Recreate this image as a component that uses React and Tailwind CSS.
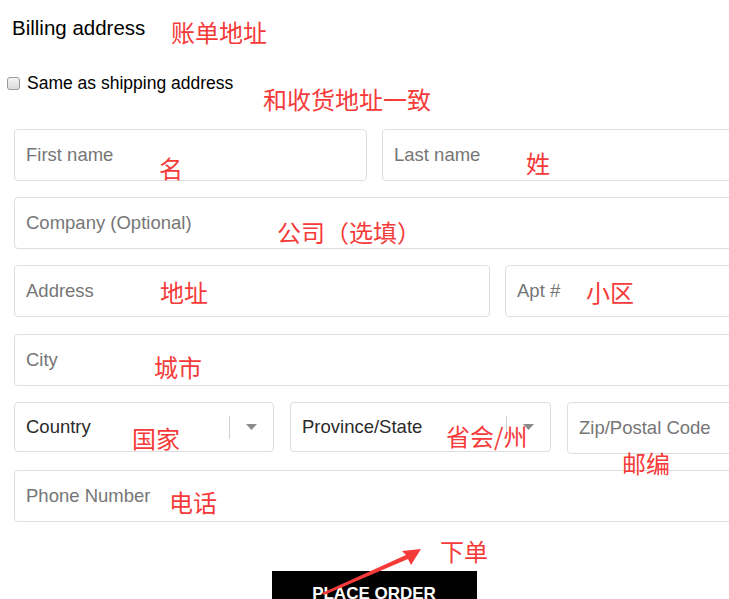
import React from 'react'

const font = { fontFamily: '"Liberation Sans", Arial, sans-serif' }

function Field({ label, className = '' }) {
  return (
    <div className={`flex h-[52px] items-center rounded-[4px] border border-[#dedede] bg-white pl-[11px] text-[18.5px] text-[#767676] ${className}`}>
      {label}
    </div>
  )
}

function SelectField({ label, className = '' }) {
  return (
    <div className={`flex h-[50px] items-center rounded-[4px] border border-[#dedede] bg-white pl-[11px] text-[18.5px] text-[#2b2b2b] ${className}`}>
      <span className="flex-1">{label}</span>
      <span className="h-[23px] w-px bg-[#d0d0d0]" />
      <span className="flex w-[43px] justify-center">
        <svg width="11" height="6" viewBox="0 0 11 6">
          <path d="M0 0 H11 L5.5 6 Z" fill="#8a8a8a" />
        </svg>
      </span>
    </div>
  )
}

function Note({ children, className }) {
  return (
    <span
      className={`absolute whitespace-nowrap text-[24px] leading-none text-[#f53a3a] ${className}`}
      style={{ fontFamily: '"Noto Sans CJK SC", "Microsoft YaHei", sans-serif' }}
    >
      {children}
    </span>
  )
}

export default function App() {
  return (
    <div className="relative h-[599px] w-[729px] overflow-hidden bg-white text-black" style={font}>
      <h2 className="ml-[12px] mt-[16px] text-[20.5px] font-normal leading-[24px]">Billing address</h2>

      <label className="mt-[33px] flex h-[20px] items-center">
        <span className="ml-[7px] h-[13px] w-[13px] rounded-[3px] border border-[#9a9a9a] bg-gradient-to-b from-[#f4f4f4] to-[#dcdcdc]" />
        <span className="ml-[7px] text-[17.5px] leading-[20px]">Same as shipping address</span>
      </label>

      <div className="ml-[14px] mt-[36px] flex w-[720px] flex-col gap-[16px]">
        <div className="grid grid-cols-[353px_1fr] gap-[15px]">
          <Field label="First name" />
          <Field label="Last name" />
        </div>
        <Field label="Company (Optional)" />
        <div className="mb-px grid grid-cols-[476px_1fr] gap-[15px]">
          <Field label="Address" />
          <Field label="Apt #" />
        </div>
        <Field label="City" />
        <div className="grid grid-cols-[260px_261px_1fr] items-start gap-[16px]">
          <SelectField label="Country" />
          <SelectField label="Province/State" />
          <Field label="Zip/Postal Code" className="h-[52px]" />
        </div>
        <Field label="Phone Number" />
        <div className="mt-[33px] flex justify-center">
          <button className="w-[205px] self-start bg-black pb-[15px] pt-[13px] text-[17px] font-bold leading-[20px] text-white">
            PLACE ORDER
          </button>
        </div>
      </div>

      <Note className="left-[171px] top-[20px]">账单地址</Note>
      <Note className="left-[263px] top-[87px]">和收货地址一致</Note>
      <Note className="left-[159px] top-[156px]">名</Note>
      <Note className="left-[526px] top-[151px]">姓</Note>
      <Note className="left-[277px] top-[220px]">公司（选填）</Note>
      <Note className="left-[160px] top-[280px]">地址</Note>
      <Note className="left-[586px] top-[280px]">小区</Note>
      <Note className="left-[154px] top-[355px]">城市</Note>
      <Note className="left-[132px] top-[426px]">国家</Note>
      <Note className="left-[446px] top-[424px]">省会/州</Note>
      <Note className="left-[622px] top-[451px]">邮编</Note>
      <Note className="left-[169px] top-[490px]">电话</Note>
      <Note className="left-[440px] top-[539px]">下单</Note>

      <svg className="absolute left-0 top-0" width="729" height="599" viewBox="0 0 729 599">
        <path d="M322 593 L406 555 L402 551 L421 549 L411 565 L408 559 L324 595 Z" fill="#f53a3a" />
      </svg>
    </div>
  )
}
